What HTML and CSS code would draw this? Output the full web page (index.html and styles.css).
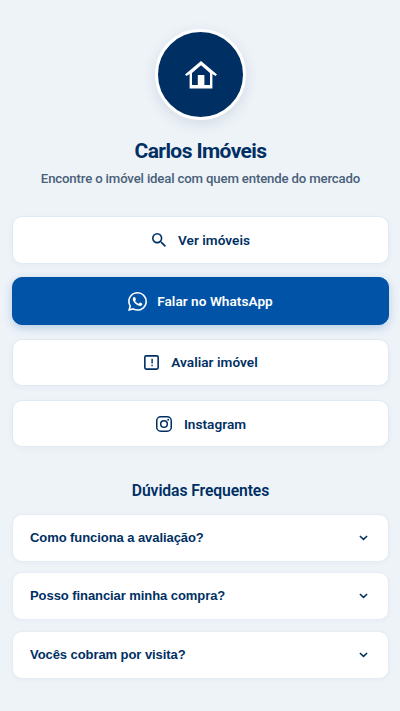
FILE: index.html
```html
<!DOCTYPE html>
<html lang="pt-BR">
<head>
<meta charset="utf-8">
<meta name="viewport" content="width=device-width, initial-scale=1">
<title>Carlos Imóveis</title>
<link rel="stylesheet" href="styles.css">
</head>
<body>
<main class="page">
  <header class="profile">
    <div class="avatar">
      <svg class="house" viewBox="0 0 32 28"><path fill="currentColor" fill-rule="evenodd" d="M16 0 0 13.6 1.6 15 4.6 12.9V27.5H27.4V12.9L30.4 15 32 13.6ZM16 4.2 25 12V24H19.4V14H12.8V24H7V12Z"/></svg>
    </div>
    <h1 class="name">Carlos Imóveis</h1>
    <p class="tagline">Encontre o imóvel ideal com quem entende do mercado</p>
  </header>
  <nav class="links">
    <a class="link">
      <svg class="icon icon-search" viewBox="3 3 17.5 17.5"><path fill="currentColor" d="M15.5 14h-.79l-.28-.27A6.47 6.47 0 0 0 16 9.5 6.5 6.5 0 1 0 9.5 16c1.61 0 3.09-.59 4.23-1.57l.27.28v.79l5 4.99L20.49 19zm-6 0C7.01 14 5 11.99 5 9.5S7.01 5 9.5 5 14 7.01 14 9.5 11.99 14 9.5 14"/></svg>
      <span>Ver imóveis</span>
    </a>
    <a class="link link-primary">
      <svg class="icon icon-whatsapp" viewBox="0 0 24 24"><path fill="currentColor" d="M17.472 14.382c-.297-.149-1.758-.867-2.03-.967-.273-.099-.471-.148-.67.15-.197.297-.767.966-.94 1.164-.173.199-.347.223-.644.075-.297-.15-1.255-.463-2.39-1.475-.883-.788-1.48-1.761-1.653-2.059-.173-.297-.018-.458.13-.606.134-.133.298-.347.446-.52.149-.174.198-.298.298-.497.099-.198.05-.371-.025-.52-.075-.149-.669-1.612-.916-2.207-.242-.579-.487-.5-.669-.51a12.8 12.8 0 0 0-.57-.01c-.198 0-.52.074-.792.372-.272.297-1.04 1.016-1.04 2.479 0 1.462 1.065 2.875 1.213 3.074.149.198 2.096 3.2 5.077 4.487.709.306 1.262.489 1.694.625.712.227 1.36.195 1.871.118.571-.085 1.758-.719 2.006-1.413.248-.694.248-1.289.173-1.413-.074-.124-.272-.198-.57-.347m-5.421 7.403h-.004a9.87 9.87 0 0 1-5.031-1.378l-.361-.214-3.741.982.998-3.648-.235-.374a9.86 9.86 0 0 1-1.51-5.26c.001-5.45 4.436-9.884 9.888-9.884 2.64 0 5.122 1.03 6.988 2.898a9.825 9.825 0 0 1 2.893 6.994c-.003 5.45-4.437 9.884-9.885 9.884m8.413-18.297A11.815 11.815 0 0 0 12.05 0C5.495 0 .16 5.335.157 11.892c0 2.096.547 4.142 1.588 5.945L.057 24l6.305-1.654a11.882 11.882 0 0 0 5.683 1.448h.005c6.554 0 11.89-5.335 11.893-11.893a11.821 11.821 0 0 0-3.48-8.413Z"/></svg>
      <span>Falar no WhatsApp</span>
    </a>
    <a class="link">
      <svg class="icon icon-evaluate" viewBox="0 0 15 15"><rect x=".85" y=".85" width="13.3" height="13.3" rx="1.3" fill="none" stroke="currentColor" stroke-width="1.6"/><path fill="currentColor" d="M7.4 3.7h1.4v4.8H7.4zM7.4 9.7h1.4v1.6H7.4z"/></svg>
      <span>Avaliar imóvel</span>
    </a>
    <a class="link">
      <svg class="icon icon-instagram" viewBox="0 0 16 16"><rect x=".75" y=".75" width="14.5" height="14.5" rx="4" fill="none" stroke="currentColor" stroke-width="1.5"/><circle cx="8" cy="8" r="3.3" fill="none" stroke="currentColor" stroke-width="1.5"/><circle cx="12.2" cy="3.8" r="1" fill="currentColor"/></svg>
      <span>Instagram</span>
    </a>
  </nav>
  <section class="faq">
    <h2 class="faq-title">Dúvidas Frequentes</h2>
    <div class="faq-list">
      <div class="question"><span>Como funciona a avaliação?</span><svg class="chevron" viewBox="0 0 9 6"><path d="M.9 1 4.5 4.4 8.1 1" fill="none" stroke="currentColor" stroke-width="1.5"/></svg></div>
      <div class="question"><span>Posso financiar minha compra?</span><svg class="chevron" viewBox="0 0 9 6"><path d="M.9 1 4.5 4.4 8.1 1" fill="none" stroke="currentColor" stroke-width="1.5"/></svg></div>
      <div class="question"><span>Vocês cobram por visita?</span><svg class="chevron" viewBox="0 0 9 6"><path d="M.9 1 4.5 4.4 8.1 1" fill="none" stroke="currentColor" stroke-width="1.5"/></svg></div>
    </div>
  </section>
</main>
</body>
</html>
```
FILE: styles.css
```css
* { box-sizing: border-box; margin: 0; }
body {
  background: #eef3f8;
  color: #003063;
  font-family: Roboto, "Liberation Sans", sans-serif;
}
.page { min-height: 711px; padding: 29px 11px 0 12px; }
.profile { display: flex; flex-direction: column; align-items: center; }
.avatar {
  display: flex; align-items: center; justify-content: center;
  width: 91px; height: 91px;
  border: 3px solid #fff; border-radius: 50%;
  background: #003063; color: #fff;
  box-shadow: 0 4px 14px rgba(0, 48, 99, .12);
}
.house { width: 32px; height: 28px; }
.name { margin-top: 18px; font-size: 21px; line-height: 26px; font-weight: 700; letter-spacing: -.6px; }
.tagline { margin-top: 6px; font-size: 13.2px; line-height: 18px; font-weight: 500; letter-spacing: -.16px; color: #486078; white-space: nowrap; }
.links { display: flex; flex-direction: column; gap: 13.7px; margin-top: 28px; }
.link {
  display: flex; align-items: center; justify-content: center; gap: 12px;
  height: 47.6px; padding-left: 1px;
  border: 1px solid #e1e9f2; border-radius: 10px;
  background: #fff;
  font-size: 13.6px; font-weight: 600; letter-spacing: .04px;
  box-shadow: 0 2px 6px rgba(0, 48, 99, .04);
}
.link-primary {
  gap: 10px; padding-left: 0;
  border-color: #0053a6; background: #0053a6; color: #fff;
  box-shadow: 0 3px 10px rgba(0, 83, 166, .24);
}
.icon { flex: none; }
.icon-search { width: 14px; height: 14px; }
.icon-whatsapp { width: 19px; height: 19px; }
.icon-evaluate { width: 15px; height: 15px; }
.icon-instagram { width: 16px; height: 16px; }
.faq { margin-top: 33.6px; }
.faq-title { text-align: center; font-size: 15.7px; line-height: 20px; font-weight: 600; letter-spacing: -.1px; }
.faq-list { display: flex; flex-direction: column; gap: 10.6px; margin-top: 13px; }
.question {
  display: flex; align-items: center; justify-content: space-between;
  height: 47.8px; padding: 0 20px 0 17px;
  border: 1px solid #e5ecf4; border-radius: 10px;
  background: #fff;
  font: 700 13px "Liberation Sans", Arial, sans-serif;
  letter-spacing: -.07px;
  box-shadow: 0 1px 4px rgba(0, 48, 99, .04);
}
.question span { padding-bottom: 1px; }
.chevron { width: 9px; height: 6px; }
```
